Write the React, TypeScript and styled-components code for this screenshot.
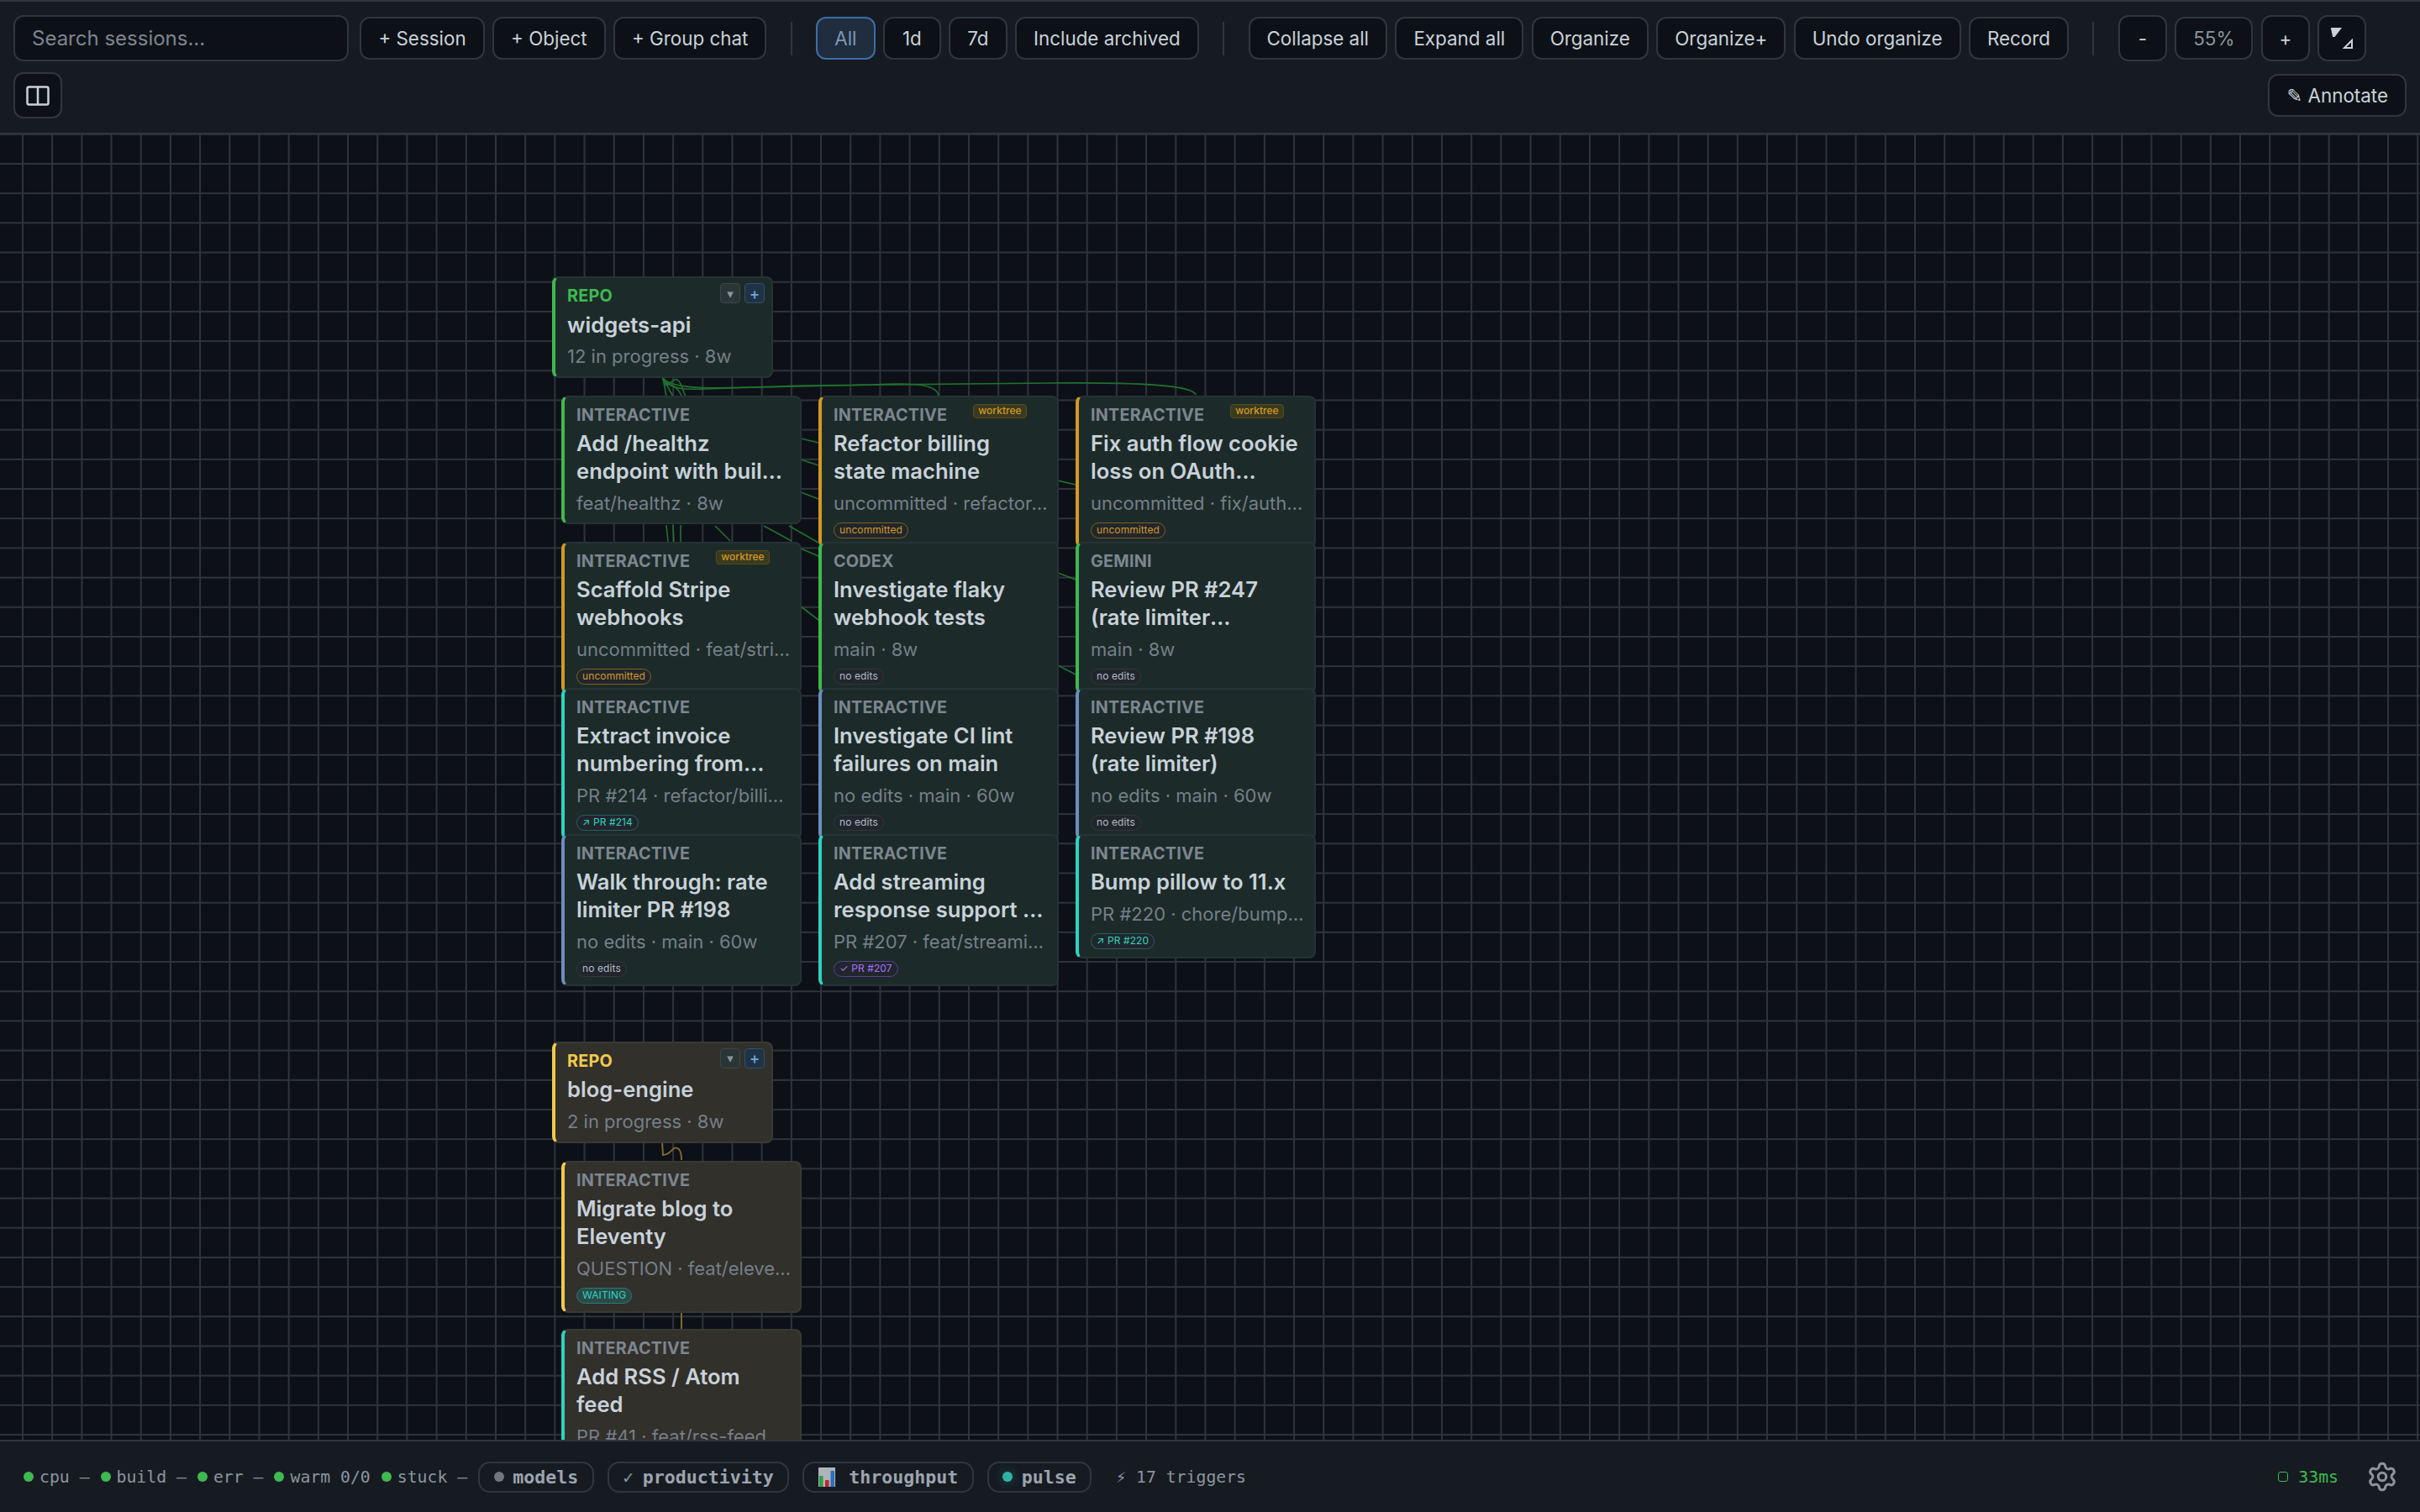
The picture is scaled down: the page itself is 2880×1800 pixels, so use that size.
import React from 'react';
import styled, { createGlobalStyle } from 'styled-components';
import { Settings } from 'lucide-react';

const GlobalStyle = createGlobalStyle`
  html, body {
    margin: 0;
    padding: 0;
    background: #0d1117;
    font-family: Inter, "Liberation Sans", sans-serif;
  }
  * {
    box-sizing: border-box;
  }
`;

const Page = styled.div`
  display: flex;
  flex-direction: column;
  width: 2880px;
  height: 1800px;
  overflow: hidden;
`;

const Toolbar = styled.header`
  display: flex;
  flex-direction: column;
  gap: 13px;
  height: 160px;
  flex: none;
  padding: 16px 16px 0;
  background: #161b22;
  border-top: 2px solid #30363d;
  border-bottom: 2px solid #30363d;
`;

const Row = styled.div`
  display: flex;
  align-items: center;
  justify-content: ${(p: { $between?: boolean }) => (p.$between ? 'space-between' : 'flex-start')};
  gap: 9.4px;
`;

const Search = styled.input`
  flex: none;
  width: 399px;
  height: 55px;
  padding: 0 20px;
  margin-right: 4px;
  background: #0d1117;
  border: 2px solid #30363d;
  border-radius: 12px;
  color: #c9d1d9;
  font: 400 24px Inter, sans-serif;
  &::placeholder {
    color: #7d8590;
    opacity: 1;
  }
`;

const Btn = styled.button<{ $active?: boolean; $muted?: boolean }>`
  flex: none;
  min-width: 69px;
  height: 51px;
  padding: 0 20px;
  background: ${(p) => (p.$active ? '#1f2d3f' : '#0d1117')};
  border: 2px solid ${(p) => (p.$active ? '#3b6ea5' : '#30363d')};
  border-radius: 12px;
  color: ${(p) => (p.$active ? '#7f98b8' : p.$muted ? '#8b949e' : '#c9d1d9')};
  font: 400 22.4px Inter, "DejaVu Sans", sans-serif;
  white-space: nowrap;
`;

const IconBtn = styled.button`
  display: flex;
  flex: none;
  align-items: center;
  justify-content: center;
  width: 58px;
  height: 55px;
  padding: 0;
  background: #0d1117;
  border: 2px solid #30363d;
  border-radius: 12px;
  color: #c9d1d9;
  font: 400 22.4px Inter, sans-serif;
`;

const Divider = styled.span`
  flex: none;
  width: 2px;
  height: 40px;
  margin: 0 19px;
  background: #30363d;
`;

const Canvas = styled.main`
  position: relative;
  flex: 1;
  overflow: hidden;
  background-color: #0d1117;
  background-image: linear-gradient(to right, #2f343c 2px, transparent 2px),
    linear-gradient(to bottom, #2f343c 2px, transparent 2px);
  background-size: 35.2px 35.2px;
  background-position: 26px 34px;
`;

const Edges = styled.svg`
  position: absolute;
  top: 0;
  left: 0;
  width: 2880px;
  height: 1554px;
  fill: none;
`;

type Tone = 'green' | 'amber' | 'teal' | 'slate' | 'yellow';

const toneColor: Record<Tone, string> = {
  green: '#3fb950',
  amber: '#d29922',
  teal: '#2dd4bf',
  slate: '#6c8ebf',
  yellow: '#f2c94c',
};

const Node = styled.article<{ $x: number; $y: number; $tone: Tone; $warm?: boolean }>`
  position: absolute;
  left: ${(p) => p.$x}px;
  top: ${(p) => p.$y - 160}px;
  background: ${(p) => (p.$warm ? '#31302b' : '#1c2b29')};
  border: 2px solid ${(p) => (p.$warm ? '#383835' : '#263236')};
  border-left: 4px solid ${(p) => toneColor[p.$tone]};
  border-radius: 8px;
`;

const RepoNode = styled(Node)`
  width: 263px;
  height: 121px;
  padding: 9px 14px 0;
`;

const SessionNode = styled(Node)`
  width: 285.5px;
  padding: 9px 14px 9px;
`;

const Kind = styled.div<{ $color?: string }>`
  font-size: 19.8px;
  line-height: 24px;
  font-weight: 700;
  letter-spacing: 0.2px;
  color: ${(p) => p.$color ?? '#7d8590'};
`;

const Title = styled.div`
  margin-top: 5.5px;
  font-size: 25.6px;
  line-height: 33px;
  font-weight: 600;
  color: #c9d1d9;
  display: -webkit-box;
  -webkit-box-orient: vertical;
  -webkit-line-clamp: 2;
  overflow: hidden;
`;

const Meta = styled.div`
  margin: 8.5px -8px 0 0;
  font-size: 22px;
  line-height: 27px;
  color: #767e89;
  white-space: nowrap;
  overflow: hidden;
  text-overflow: ellipsis;
`;

type PillKind = 'uncommitted' | 'none' | 'pr' | 'merged' | 'waiting';

const pillStyles: Record<PillKind, [string, string, string]> = {
  uncommitted: ['#21262d', '#7d5f1c', '#d29922'],
  none: ['#21262d', '#30363d', '#b1bac4'],
  pr: ['#21262d', '#285c66', '#2dd4bf'],
  merged: ['#21262d', '#5a3f93', '#a371f7'],
  waiting: ['#2a4a48', '#2c7a70', '#2dd4bf'],
};

const Pill = styled.div<{ $kind: PillKind }>`
  display: flex;
  width: fit-content;
  align-items: center;
  height: 19px;
  margin-top: 9px;
  padding: 0 6px;
  background: ${(p) => pillStyles[p.$kind][0]};
  border: 1.5px solid ${(p) => pillStyles[p.$kind][1]};
  border-radius: 10px;
  color: ${(p) => pillStyles[p.$kind][2]};
  font-size: 12px;
  line-height: 16px;
  letter-spacing: 0.1px;
  white-space: nowrap;
`;

const Worktree = styled.span`
  position: absolute;
  top: 8.5px;
  right: 36px;
  height: 17px;
  padding: 0 5px;
  background: #3a3a20;
  border: 1.5px solid #594a1f;
  border-radius: 4px;
  color: #d29922;
  font-size: 12px;
  line-height: 14px;
  font-weight: 500;
`;

const RepoActions = styled.div`
  position: absolute;
  top: 6px;
  right: 8px;
  display: flex;
  gap: 5px;
`;

const RepoBtn = styled.button<{ $add?: boolean }>`
  display: flex;
  align-items: center;
  justify-content: center;
  width: 24px;
  height: 24px;
  padding: 0;
  background: ${(p) => (p.$add ? '#1f3345' : '#2a3536')};
  border: 1.5px solid ${(p) => (p.$add ? '#2f4f70' : '#3b4648')};
  border-radius: 4px;
  color: ${(p) => (p.$add ? '#6d9ed6' : '#8b949e')};
  font: 600 ${(p) => (p.$add ? '18px' : '15px')} Inter, "DejaVu Sans", sans-serif;
`;

const StatusBar = styled.footer`
  display: flex;
  align-items: center;
  flex: none;
  height: 86px;
  padding: 0 26px 0 28px;
  background: #161b22;
  border-top: 2px solid #30363d;
  font: 400 19.8px "DejaVu Sans Mono", monospace;
  color: #8b949e;
`;

const Health = styled.span`
  display: flex;
  align-items: center;
  gap: 7px;
  margin-right: 13px;
  white-space: pre;
`;

const Dot = styled.i<{ $color: string; $glow?: boolean }>`
  display: block;
  flex: none;
  width: 12px;
  height: 12px;
  border-radius: 50%;
  background: ${(p) => p.$color};
  box-shadow: ${(p) => (p.$glow ? `0 0 12px ${p.$color}66` : 'none')};
`;

const Chip = styled.span`
  display: flex;
  align-items: center;
  gap: 10.5px;
  height: 37px;
  margin-right: 16px;
  padding: 0 16.5px;
  border: 2px solid #30363d;
  border-radius: 14px;
  color: #9ca4ae;
  font-size: 21.6px;
  font-weight: 700;
`;

const ChipCheck = styled.span`
  font-weight: 400;
  color: #8b949e;
`;

const ChartSvg = styled.svg`
  margin-right: 6px;
`;

const Triggers = styled.span`
  margin-left: 13px;
  white-space: pre;
`;

const Latency = styled.span`
  display: flex;
  align-items: center;
  gap: 12px;
  margin-left: auto;
  margin-right: 33px;
  color: #3fb950;
`;

const LatencyBox = styled.i`
  display: block;
  width: 12px;
  height: 12px;
  border: 1.5px solid #3fb950;
  border-radius: 3px;
`;

function PanelIcon() {
  return (
    <svg width="28" height="24" viewBox="0 0 28 24" fill="none" stroke="#c9d1d9" strokeWidth="2.5">
      <rect x="1.5" y="1.5" width="25" height="21" rx="2" />
      <path d="M14 1.5v21" />
    </svg>
  );
}

function FitIcon() {
  return (
    <svg width="27" height="25" viewBox="0 0 27 25" fill="none" stroke="#c9d1d9" strokeWidth="2">
      <path d="M1 1h10l-7 9H3z" fill="#c9d1d9" />
      <path d="M25 24H16l9-9z" />
    </svg>
  );
}

function ChartIcon() {
  return (
    <ChartSvg width="20" height="23" viewBox="0 0 20 23">
      <rect width="20" height="23" fill="#aeb4bb" />
      <rect x="1" y="10" width="4.5" height="13" fill="#2e9e46" />
      <rect x="8" y="15" width="4.5" height="8" fill="#c0262d" />
      <rect x="14.5" y="4" width="4.5" height="19" fill="#2a6fc0" />
    </ChartSvg>
  );
}

const edgeGreen = [
  'M789 450C789 462 800 450 811 471',
  'M789 450C792 470 800 448 806 452C812 456 814 470 816 472',
  'M789 450C800 470 830 462 900 461L1040 458C1090 455 1115 458 1117 471',
  'M789 450C800 465 850 463 960 459L1250 456C1350 455 1420 458 1423 470',
  'M789 450L793 472',
  'M789 450L801 472',
  'M793 625L795 645',
  'M801 625L802 645',
  'M810 625L810 645',
  'M851 626L869 644',
  'M909 626L942 644',
  'M939 626L974 646',
  'M953 522L974 527',
  'M953 547L974 554',
  'M953 586L974 594',
  'M953 653L974 662',
  'M953 722L974 738',
  'M1259 572L1280 577',
  'M1259 682L1280 690',
  'M1259 792L1280 803',
];

const edgeYellow = [
  'M788 1360L789 1375C800 1375 800 1362 808 1368C811 1372 811 1378 811 1381',
  'M811 1563L811 1582',
];

type Session = {
  x: number;
  y: number;
  tone: Tone;
  kind: string;
  title: string;
  meta: string;
  worktree?: boolean;
  pill?: { kind: PillKind; text: string };
  warm?: boolean;
};

const COL_1 = 668;
const COL_2 = 974;
const COL_3 = 1280;
const ROWS = [470.5, 644.5, 818.5, 992.5];

const sessions: Session[] = [
  { x: COL_1, y: ROWS[0], tone: 'green', kind: 'INTERACTIVE', title: 'Add /healthz endpoint with build info', meta: 'feat/healthz · 8w' },
  { x: COL_1, y: ROWS[1], tone: 'amber', kind: 'INTERACTIVE', title: 'Scaffold Stripe webhooks', meta: 'uncommitted · feat/stripe-webhooks', worktree: true, pill: { kind: 'uncommitted', text: 'uncommitted' } },
  { x: COL_1, y: ROWS[2], tone: 'teal', kind: 'INTERACTIVE', title: 'Extract invoice numbering from billing module', meta: 'PR #214 · refactor/billing-invoice', pill: { kind: 'pr', text: '↗ PR #214' } },
  { x: COL_1, y: ROWS[3], tone: 'slate', kind: 'INTERACTIVE', title: 'Walk through: rate limiter PR #198', meta: 'no edits · main · 60w', pill: { kind: 'none', text: 'no edits' } },
  { x: COL_2, y: ROWS[0], tone: 'amber', kind: 'INTERACTIVE', title: 'Refactor billing state machine', meta: 'uncommitted · refactor/billing-state', worktree: true, pill: { kind: 'uncommitted', text: 'uncommitted' } },
  { x: COL_2, y: ROWS[1], tone: 'green', kind: 'CODEX', title: 'Investigate flaky webhook tests', meta: 'main · 8w', pill: { kind: 'none', text: 'no edits' } },
  { x: COL_2, y: ROWS[2], tone: 'slate', kind: 'INTERACTIVE', title: 'Investigate CI lint failures on main', meta: 'no edits · main · 60w', pill: { kind: 'none', text: 'no edits' } },
  { x: COL_2, y: ROWS[3], tone: 'teal', kind: 'INTERACTIVE', title: 'Add streaming response support\u00A0…', meta: 'PR #207 · feat/streaming-response', pill: { kind: 'merged', text: '✓ PR #207' } },
  { x: COL_3, y: ROWS[0], tone: 'amber', kind: 'INTERACTIVE', title: 'Fix auth flow cookie loss on OAuth redirect', meta: 'uncommitted · fix/auth-cookie', worktree: true, pill: { kind: 'uncommitted', text: 'uncommitted' } },
  { x: COL_3, y: ROWS[1], tone: 'green', kind: 'GEMINI', title: 'Review PR #247 (rate limiter implementation)', meta: 'main · 8w', pill: { kind: 'none', text: 'no edits' } },
  { x: COL_3, y: ROWS[2], tone: 'slate', kind: 'INTERACTIVE', title: 'Review PR #198 (rate limiter)', meta: 'no edits · main · 60w', pill: { kind: 'none', text: 'no edits' } },
  { x: COL_3, y: ROWS[3], tone: 'teal', kind: 'INTERACTIVE', title: 'Bump pillow to 11.x', meta: 'PR #220 · chore/bump-pillow', pill: { kind: 'pr', text: '↗ PR #220' } },
  { x: COL_1, y: 1381.5, tone: 'yellow', warm: true, kind: 'INTERACTIVE', title: 'Migrate blog to Eleventy', meta: 'QUESTION · feat/eleventy-migration', pill: { kind: 'waiting', text: 'WAITING' } },
  { x: COL_1, y: 1581.5, tone: 'teal', warm: true, kind: 'INTERACTIVE', title: 'Add RSS / Atom feed', meta: 'PR #41 · feat/rss-feed' },
];

const repos = [
  { y: 329, tone: 'green' as Tone, name: 'widgets-api', meta: '12 in progress · 8w', warm: false },
  { y: 1239.5, tone: 'yellow' as Tone, name: 'blog-engine', meta: '2 in progress · 8w', warm: true },
];

const health = ['cpu —', 'build —', 'err —', 'warm 0/0', 'stuck —'];

export default function App() {
  return (
    <Page>
      <GlobalStyle />
      <Toolbar>
        <Row>
          <Search placeholder="Search sessions..." />
          <Btn>+ Session</Btn>
          <Btn>+ Object</Btn>
          <Btn>+ Group chat</Btn>
          <Divider />
          <Btn $active>All</Btn>
          <Btn>1d</Btn>
          <Btn>7d</Btn>
          <Btn>Include archived</Btn>
          <Divider />
          <Btn>Collapse all</Btn>
          <Btn>Expand all</Btn>
          <Btn>Organize</Btn>
          <Btn>Organize+</Btn>
          <Btn>Undo organize</Btn>
          <Btn>Record</Btn>
          <Divider />
          <IconBtn>-</IconBtn>
          <Btn $muted>55%</Btn>
          <IconBtn>+</IconBtn>
          <IconBtn>
            <FitIcon />
          </IconBtn>
        </Row>
        <Row $between>
          <IconBtn>
            <PanelIcon />
          </IconBtn>
          <Btn>✎ Annotate</Btn>
        </Row>
      </Toolbar>

      <Canvas>
        <Edges viewBox="0 160 2880 1554">
          {edgeGreen.map((d) => (
            <path key={d} d={d} stroke="#21702f" strokeWidth="1.6" />
          ))}
          {edgeYellow.map((d) => (
            <path key={d} d={d} stroke="#7d6a2a" strokeWidth="2" />
          ))}
        </Edges>

        {repos.map((r) => (
          <RepoNode key={r.name} $x={657} $y={r.y} $tone={r.tone} $warm={r.warm}>
            <Kind $color={toneColor[r.tone]}>REPO</Kind>
            <RepoActions>
              <RepoBtn>▾</RepoBtn>
              <RepoBtn $add>+</RepoBtn>
            </RepoActions>
            <Title>{r.name}</Title>
            <Meta>{r.meta}</Meta>
          </RepoNode>
        ))}

        {sessions.map((s) => (
          <SessionNode key={s.title} $x={s.x} $y={s.y} $tone={s.tone} $warm={s.warm}>
            <Kind>{s.kind}</Kind>
            {s.worktree && <Worktree>worktree</Worktree>}
            <Title>{s.title}</Title>
            <Meta>{s.meta}</Meta>
            {s.pill && <Pill $kind={s.pill.kind}>{s.pill.text}</Pill>}
          </SessionNode>
        ))}
      </Canvas>

      <StatusBar>
        {health.map((h) => (
          <Health key={h}>
            <Dot $color="#3fb950" />
            {h}
          </Health>
        ))}
        <Chip>
          <Dot $color="#6e7681" />
          models
        </Chip>
        <Chip>
          <ChipCheck>✓</ChipCheck>
          productivity
        </Chip>
        <Chip>
          <ChartIcon />
          throughput
        </Chip>
        <Chip>
          <Dot $color="#2fb3a6" $glow />
          pulse
        </Chip>
        <Triggers>⚡ 17 triggers</Triggers>
        <Latency>
          <LatencyBox />
          33ms
        </Latency>
        <Settings size={38} strokeWidth={1.9} color="#8b949e" />
      </StatusBar>
    </Page>
  );
}
